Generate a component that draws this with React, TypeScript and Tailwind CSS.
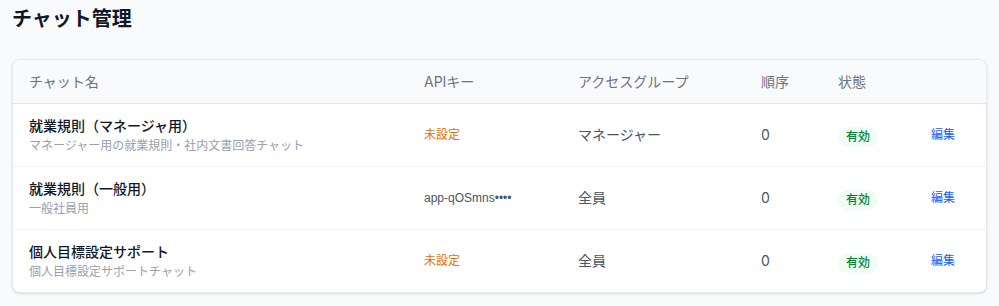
const chats = [
  {
    name: "就業規則（マネージャ用）",
    description: "マネージャー用の就業規則・社内文書回答チャット",
    apiKey: "",
    group: "マネージャー",
    order: 0,
  },
  {
    name: "就業規則（一般用）",
    description: "一般社員用",
    apiKey: "app-qOSmns••••",
    group: "全員",
    order: 0,
  },
  {
    name: "個人目標設定サポート",
    description: "個人目標設定サポートチャット",
    apiKey: "",
    group: "全員",
    order: 0,
  },
];

export default function App() {
  return (
    <div
      className="min-h-[306px] bg-gray-50 px-3 pt-[5px] pb-3"
      style={{ fontFamily: 'Inter, "Noto Sans CJK JP", sans-serif' }}
    >
      <h1 className="text-xl font-bold leading-7 text-gray-900 mb-[26px]">チャット管理</h1>

      <div className="overflow-hidden rounded-lg border border-gray-200 bg-white shadow-sm">
        <table className="w-full table-fixed border-collapse text-left">
          <colgroup>
            <col className="w-[395px]" />
            <col className="w-[154px]" />
            <col className="w-[183px]" />
            <col className="w-[77px]" />
            <col className="w-[93px]" />
            <col />
          </colgroup>
          <thead className="bg-gray-50">
            <tr className="border-b border-gray-200">
              <th className="px-4 py-[11.5px] text-sm font-normal leading-5 text-gray-500">チャット名</th>
              <th className="px-4 py-[11.5px] text-sm font-normal leading-5 text-gray-500">APIキー</th>
              <th className="px-4 py-[11.5px] text-sm font-normal leading-5 text-gray-500">アクセスグループ</th>
              <th className="px-4 py-[11.5px] text-sm font-normal leading-5 text-gray-500">順序</th>
              <th className="px-4 py-[11.5px] text-sm font-normal leading-5 text-gray-500">状態</th>
              <th className="px-4 py-[11.5px]" />
            </tr>
          </thead>
          <tbody>
            {chats.map((chat, i) => (
              <tr key={i} className={i < chats.length - 1 ? "border-b border-gray-100" : ""}>
                <td className="px-4 py-3">
                  <div className="text-sm font-medium leading-5 text-gray-900">{chat.name}</div>
                  <div className="mt-0.5 text-xs leading-4 text-gray-400">{chat.description}</div>
                </td>
                <td className="px-4 py-3 text-xs">
                  {chat.apiKey ? (
                    <span className="text-gray-600 font-['Liberation_Sans',sans-serif]">{chat.apiKey}</span>
                  ) : (
                    <span className="text-amber-600">未設定</span>
                  )}
                </td>
                <td className="px-4 py-3 text-sm text-gray-600">{chat.group}</td>
                <td className="px-4 py-3 text-sm text-gray-600">{chat.order}</td>
                <td className="px-4 py-3">
                  <span className="inline-block rounded-full bg-green-50 px-2 py-0.5 text-xs leading-4 font-medium text-green-700">
                    有効
                  </span>
                </td>
                <td className="px-4 py-3 text-xs text-blue-600">編集</td>
              </tr>
            ))}
          </tbody>
        </table>
      </div>
    </div>
  );
}
